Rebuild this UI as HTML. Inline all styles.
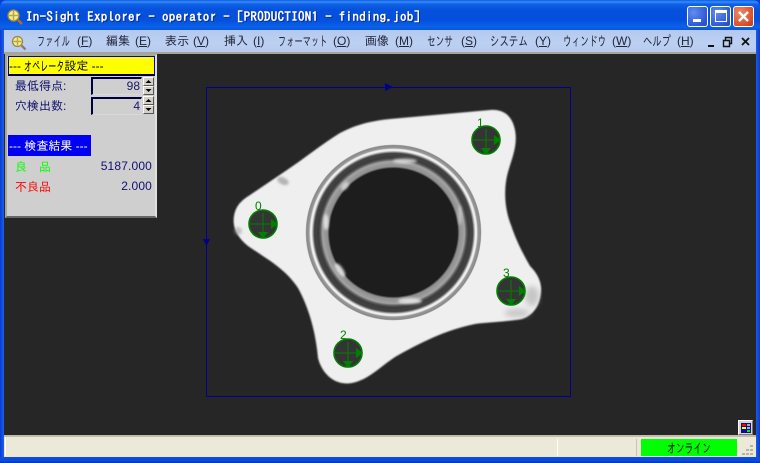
<!DOCTYPE html>
<html><head><meta charset="utf-8"><style>
html,body{margin:0;padding:0;background:#0a3ad8}
body{width:760px;height:463px;position:relative;overflow:hidden;font-family:"Liberation Sans","IPAGothic",sans-serif}
div,span.a{position:absolute;box-sizing:border-box}
.m{position:absolute;top:33px;font:12px/16px "Liberation Sans","IPAGothic",sans-serif;color:#22263a;white-space:pre}
.m u{text-underline-offset:1px}
.k{position:absolute;top:33px;font:12px/16px "IPAGothic",sans-serif;color:#22263a;white-space:pre;transform-origin:0 0}
.q{font-size:13.5px}
.p{position:absolute;font:12px/16px "Liberation Sans","IPAGothic",sans-serif;white-space:pre}
.n{display:inline-block;transform-origin:0 0;font-family:"IPAGothic",sans-serif;font-size:13.5px;vertical-align:top}
.btn{top:6px;width:21px;height:21px;border:1px solid #fff;border-radius:3px}
.spin{left:143px;width:11px;height:9px;background:#d4d0c8;border:1px solid;border-color:#fff #555 #555 #fff}
</style></head><body>
<div style="left:0;top:0;width:760px;height:31px;border-radius:7px 7px 0 0;background:linear-gradient(#0a5ce6 0,#3a8cf6 2px,#0f62e6 4px,#0551dc 10px,#0450dd 20px,#0a62ea 27px,#0a55d8 30px)"></div>
<div style="left:0;top:30px;width:4px;height:433px;background:linear-gradient(90deg,#0a3ad0,#1a62ee)"></div>
<div style="left:756px;top:30px;width:4px;height:433px;background:linear-gradient(90deg,#1a5ce8,#0a3ad0)"></div>
<div style="left:0;top:457px;width:760px;height:6px;background:linear-gradient(#0a50e0,#0a48d8 70%,#0a2ea8)"></div>

<svg style="position:absolute;left:6px;top:8px" width="18" height="18" viewBox="0 0 18 18"><circle cx="7.500" cy="7.500" r="5.500" fill="#f6ee90" stroke="#9a8a40" stroke-width="1.300"/><path d="M7.500 3v9M3 7.500h9" stroke="#b8a848" stroke-width="1.500"/><path d="M12 12l4 4" stroke="#b86a30" stroke-width="2.400"/></svg>
<span class="a" style="left:26px;top:9px;font:bold 13px/15px 'IPAGothic','Liberation Mono',monospace;letter-spacing:.3px;color:#fff;white-space:pre;text-shadow:1px 1px 0 #0a2f98">In-Sight Explorer - operator - [PRODUCTION1 - finding.job]</span>

<div class="btn" style="left:687px;background:radial-gradient(circle at 30% 30%,#5f8df0,#2f58d8 70%,#2a48b8)"><div style="left:5px;top:12px;width:8px;height:3px;background:#fff"></div></div>
<div class="btn" style="left:710px;background:radial-gradient(circle at 30% 30%,#5f8df0,#2f58d8 70%,#2a48b8)"><div style="left:4px;top:3px;width:12px;height:12px;border:1px solid #fff;border-top-width:3px"></div></div>
<div class="btn" style="left:733px;background:radial-gradient(circle at 30% 30%,#ec8a68,#d8502a 70%,#b83a18)"><svg style="position:absolute;left:3px;top:3px" width="13" height="13"><path d="M2 2l9 9M11 2l-9 9" stroke="#fff" stroke-width="2.400"/></svg></div>

<div style="left:4px;top:30px;width:752px;height:22px;background:linear-gradient(#b3c9ee,#bcd0f2 60%,#b6cbef)"></div>
<div style="left:4px;top:52px;width:752px;height:2px;background:#a8a498"></div>
<svg style="position:absolute;left:11px;top:35px" width="17" height="17" viewBox="0 0 17 17"><circle cx="6.500" cy="6.500" r="5" fill="#f4ec90" stroke="#9a8a40" stroke-width="1.300"/><path d="M6.500 2.500v8M2.500 6.500h8" stroke="#b8a848" stroke-width="1.400"/><path d="M10.500 10.500l4 4" stroke="#8a7a60" stroke-width="2.200"/></svg>

<span class="k q" style="left:37px;transform:scaleX(.61)">ファイル</span><span class="m" style="left:77px">(<u>F</u>)</span>
<span class="k" style="left:106px">編集</span><span class="m" style="left:135px">(<u>E</u>)</span>
<span class="k" style="left:165px">表示</span><span class="m" style="left:193px">(<u>V</u>)</span>
<span class="k" style="left:224px">挿入</span><span class="m" style="left:253px">(<u>I</u>)</span>
<span class="k q" style="left:278px;transform:scaleX(.61)">フォーマット</span><span class="m" style="left:333px">(<u>O</u>)</span>
<span class="k" style="left:365px">画像</span><span class="m" style="left:395px">(<u>M</u>)</span>
<span class="k q" style="left:427px;transform:scaleX(.64)">センサ</span><span class="m" style="left:461px">(<u>S</u>)</span>
<span class="k q" style="left:490px;transform:scaleX(.70)">システム</span><span class="m" style="left:535px">(<u>Y</u>)</span>
<span class="k q" style="left:563px;transform:scaleX(.64)">ウィンドウ</span><span class="m" style="left:612px">(<u>W</u>)</span>
<span class="k q" style="left:643px;transform:scaleX(.69)">ヘルプ</span><span class="m" style="left:677px">(<u>H</u>)</span>
<svg style="position:absolute;left:704px;top:36px" width="48" height="12"><path d="M4 9h6v2H4z" fill="#111"/><path d="M19.500 4.500h6v6h-6zM21.500 4V1.500h6v6h-2" fill="none" stroke="#111" stroke-width="1.400"/><path d="M38 2l7 7M45 2l-7 7" stroke="#111" stroke-width="1.800"/></svg>

<svg style="position:absolute;left:4px;top:54px" width="752" height="383" viewBox="4 54 752 383">
<defs>
<radialGradient id="r" gradientUnits="userSpaceOnUse" cx="393.5" cy="232.5" r="88">
<stop offset=".727" stop-color="#222"/><stop offset=".75" stop-color="#8f8f8f"/><stop offset=".807" stop-color="#a2a2a2"/><stop offset=".83" stop-color="#5c5c5c"/><stop offset=".85" stop-color="#3c3c3c"/><stop offset=".9" stop-color="#444"/><stop offset=".915" stop-color="#999"/><stop offset=".93" stop-color="#eee"/><stop offset=".945" stop-color="#eee"/><stop offset=".96" stop-color="#999"/><stop offset=".99" stop-color="#888"/><stop offset="1" stop-color="#ddd"/>
</radialGradient>
<filter id="s" x="-2%" y="-2%" width="104%" height="104%"><feGaussianBlur stdDeviation=".7"/></filter>
<filter id="b"><feGaussianBlur stdDeviation="1.200"/></filter>
<filter id="b3"><feGaussianBlur stdDeviation="3"/></filter>
<g id="t"><circle r="14.500" fill="#343434"/><circle r="14" fill="none" stroke="#008000" stroke-width="1.600"/><path d="M-13 0H8M0-11V8" stroke="#008000" stroke-width="1"/><path d="M8-5l7 5-7 5zM-5 8h10l-5 7z" fill="#008000"/></g>
</defs>
<rect x="4" y="54" width="752" height="383" fill="#262626"/>
<path filter="url(#s)" d="M390 119L490 110C503 109 512 115 515 130C518 145 512 158 508 172C503 190 505 210 511 225C516 240 522 252 530 266C538 274 542 283 541 292C540 305 534 315 522 319C505 322 490 322 475 324C445 330 420 343 395 357C380 367 368 380 352 383C335 386 322 374 318 358C316 335 310 310 298 288C285 268 265 258 248 246C238 238 232 228 234 216C236 205 242 200 250 195L287 170C305 158 322 144 340 133C355 125 370 121 390 119Z" fill="#efefef"/>
<circle cx="393.5" cy="232.5" r="88" fill="url(#r)"/>
<circle cx="393.5" cy="232.5" r="64" fill="#1d1d1d"/>
<g filter="url(#b)" fill="#e4e4e4">
<ellipse cx="405" cy="161" rx="12" ry="2.500" opacity=".8"/>
<ellipse cx="326" cy="222" rx="2.500" ry="8" opacity=".95"/>
<ellipse cx="345" cy="186" rx="3" ry="5" transform="rotate(40 345 186)" opacity=".7"/>
<ellipse cx="340" cy="270" rx="3" ry="8" transform="rotate(-35 340 270)" opacity=".9"/>
<ellipse cx="410" cy="301" rx="12" ry="3" opacity=".9"/>
<ellipse cx="460" cy="215" rx="2" ry="10" opacity=".5"/>
</g>
<g filter="url(#b)" fill="#9a9a9a">
<ellipse cx="283" cy="181" rx="6" ry="3.500" transform="rotate(25 283 181)" opacity=".7"/>
<ellipse cx="238" cy="231" rx="4" ry="4" opacity=".5"/>
</g>
<g filter="url(#b3)" fill="#aaa">
<ellipse cx="532" cy="296" rx="7" ry="10" opacity=".6"/>
<ellipse cx="517" cy="313" rx="13" ry="4" opacity=".6"/>
</g>
<rect x="206.500" y="87.500" width="364" height="309" fill="none" stroke="#00008b"/>
<path d="M385 83l8 4-8 4z" fill="#00008b"/><path d="M203 239h7l-3.500 7z" fill="#00008b"/>
<use href="#t" x="263" y="224"/><use href="#t" x="486" y="140"/><use href="#t" x="348" y="353"/><use href="#t" x="511" y="291"/>
<g font-family="Liberation Sans" font-size="12" fill="#008000"><text x="255" y="210">0</text><text x="477" y="127">1</text><text x="340" y="339">2</text><text x="503" y="277">3</text></g>
</svg>

<div style="left:738px;top:420px;width:15px;height:15px;background:#d8d4c8;border:1px solid;border-color:#fff #777 #777 #fff"><div style="left:2px;top:2px;width:10px;height:10px;background:#101080"></div><div style="left:3px;top:3px;width:4px;height:2px;background:#f00"></div><div style="left:3px;top:6px;width:4px;height:2px;background:#ff0"></div><div style="left:3px;top:9px;width:4px;height:2px;background:#00f"></div><div style="left:8px;top:3px;width:3px;height:2px;background:#aac"></div><div style="left:8px;top:6px;width:3px;height:2px;background:#aac"></div><div style="left:8px;top:9px;width:3px;height:2px;background:#0e0"></div></div>

<div style="left:5px;top:54px;width:152px;height:164px;background:#cfcfcf;border:2px solid;border-color:#a8a8a0 #e0e0e0 #666 #a8a8a0"></div>
<div style="left:8px;top:56px;width:147px;height:20px;background:#ff0;border:1px solid #0000c8;border-bottom:2px solid #000040"></div>
<span class="p" style="left:9px;top:58px;color:#000">--- <span class="n" style="width:40px;transform:scaleX(.6)">オペレータ</span>設定 ---</span>
<span class="p" style="left:15px;top:78px;color:#101070">最低得点:</span>
<span class="p" style="left:15px;top:98px;color:#101070">穴検出数:</span>
<div style="left:91px;top:77px;width:51px;height:18px;background:#cfcfcf;border:1px solid #d8d8d8;border-top:2px solid #000040;border-left:2px solid #000040"></div>
<div style="left:91px;top:97px;width:51px;height:18px;background:#cfcfcf;border:1px solid #d8d8d8;border-top:2px solid #000040;border-left:2px solid #000040"></div>
<span class="a" style="left:91px;top:78px;width:49px;text-align:right;font:12px/16px 'Liberation Sans';color:#1a1a6a">98</span>
<span class="a" style="left:91px;top:98px;width:49px;text-align:right;font:12px/16px 'Liberation Sans';color:#1a1a6a">4</span>
<div class="spin" style="top:77px"></div><div class="spin" style="top:86px"></div><div class="spin" style="top:96px"></div><div class="spin" style="top:105px"></div>
<svg style="position:absolute;left:143px;top:77px" width="11" height="37"><path d="M2.500 6l3-3 3 3zM2.500 12l3 3 3-3zM2.500 25l3-3 3 3zM2.500 31l3 3 3-3z" fill="#000"/></svg>
<div style="left:8px;top:135px;width:83px;height:21px;background:#0000f4"></div>
<span class="p" style="left:9px;top:138px;color:#fff">--- 検査結果 ---</span>
<span class="p" style="left:15px;top:159px;color:#0f0">良　品</span>
<span class="p" style="left:15px;top:179px;color:#f00">不良品</span>
<span class="a" style="left:60px;top:158px;width:92px;text-align:right;font:12px/16px 'Liberation Sans';color:#101070;letter-spacing:.15px">5187.000</span>
<span class="a" style="left:60px;top:178px;width:92px;text-align:right;font:12px/16px 'Liberation Sans';color:#101070;letter-spacing:.15px">2.000</span>

<div style="left:4px;top:435px;width:752px;height:22px;background:#ece9d8;border-top:2px solid #c0bcae"></div>
<div style="left:5px;top:437px;width:1px;height:19px;background:#fff"></div>
<div style="left:557px;top:439px;width:1px;height:17px;background:#fff"></div>
<div style="left:636px;top:439px;width:1px;height:17px;background:#c8c4b4"></div>
<div style="left:641px;top:439px;width:96px;height:17px;background:#0f0"></div>
<span class="k q" style="left:667px;top:440px;color:#000;transform:scaleX(.65)">オンライン</span>
<svg style="position:absolute;left:741px;top:444px" width="14" height="13"><path d="M9 1h3v2H9zM5 5h3v2H5zM9 5h3v2H9zM1 9h3v2H1zM5 9h3v2H5zM9 9h3v2H9z" fill="#b8b4a4"/></svg>
</body></html>
